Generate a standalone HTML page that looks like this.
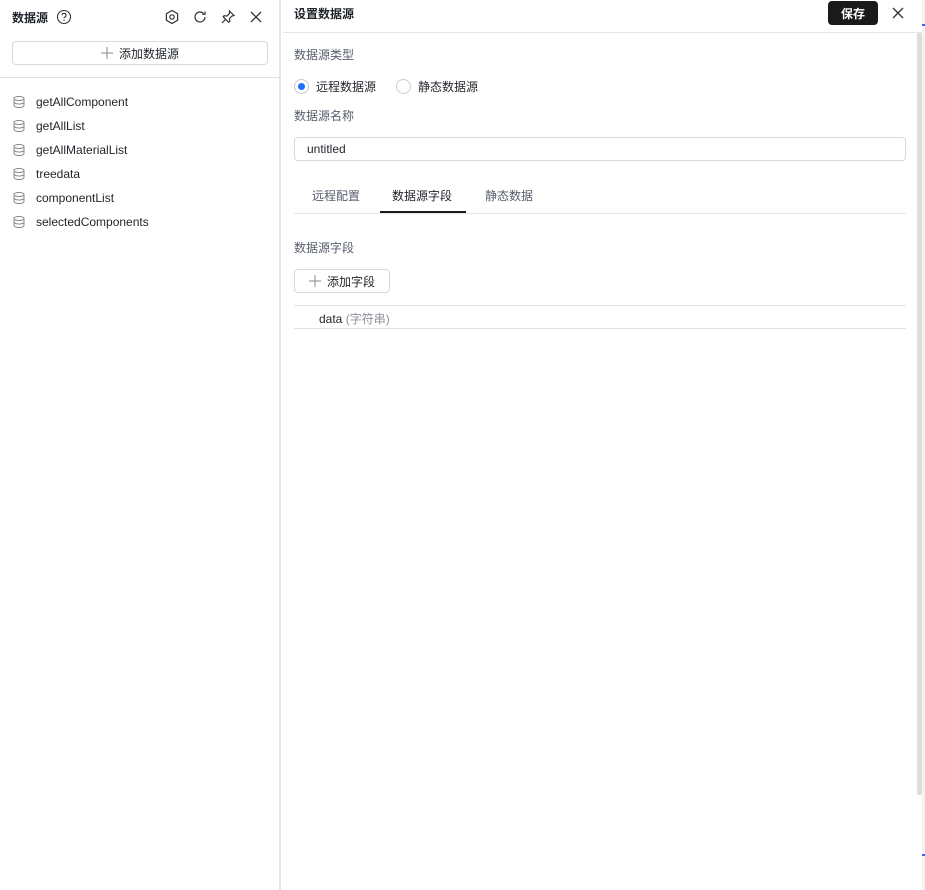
<!DOCTYPE html>
<html><head><meta charset="utf-8"><style>
*{box-sizing:border-box;margin:0;padding:0}
body{width:925px;height:890px;overflow:hidden;background:#fff;font-family:"Liberation Sans","Noto Sans CJK SC",sans-serif;font-size:12px;color:#1f2329;position:relative}
.abs{position:absolute}
.left{left:0;top:0;width:281px;height:890px;border-right:2px solid #e6e6e6}
.item{position:absolute;left:12px;height:20px;display:flex;align-items:center;font-size:12px;color:#1f2329}
.item svg{margin-right:10px}
.lbl{color:#575d6c;font-size:12px}
.btn{display:flex;align-items:center;justify-content:center}
.btn svg{margin-right:6px}
</style></head><body>
<div class="abs left">
  <div class="abs" style="left:12px;top:9px;font-weight:bold;font-size:12px">数据源</div>
  <svg class="abs" style="left:56px;top:9px" width="16" height="16" viewBox="0 0 16 16"><circle cx="8" cy="8" r="6.5" fill="none" stroke="#333" stroke-width="1.1"/><path d="M6 6.3a2 2 0 1 1 2.6 1.9c-.5.2-.6.5-.6 1.1" fill="none" stroke="#333" stroke-width="1.1"/><circle cx="8" cy="11.3" r=".7" fill="#333"/></svg>
  <svg class="abs" style="left:164px;top:9px" width="16" height="16" viewBox="0 0 16 16"><path d="M8 1.5l5.6 3.2v6.6L8 14.5 2.4 11.3V4.7z" fill="none" stroke="#333" stroke-width="1.2"/><circle cx="8" cy="8" r="2.2" fill="none" stroke="#333" stroke-width="1.2"/></svg>
  <svg class="abs" style="left:192px;top:9px" width="16" height="16" viewBox="0 0 16 16"><path d="M13 8a5 5 0 1 1-1.5-3.6M13 2.5v2.8h-2.8" fill="none" stroke="#333" stroke-width="1.2"/></svg>
  <svg class="abs" style="left:220px;top:9px" width="16" height="16" viewBox="0 0 16 16"><path d="M9.5 2l4.5 4.5-2 .5-2.5 2.5.2 3-1 .8L3.2 7.8l.8-1 3 .2L9.5 4.5zM5.5 10.5L2 14" fill="none" stroke="#333" stroke-width="1.2"/></svg>
  <svg class="abs" style="left:249px;top:10px" width="14" height="14" viewBox="0 0 14 14"><path d="M2 2l10 10M12 2L2 12" stroke="#333" stroke-width="1.3"/></svg>
  <div class="abs btn" style="left:12px;top:41px;width:256px;height:24px;border:1px solid #d9d9d9;border-radius:4px;font-size:12px"><svg width="12" height="12" viewBox="0 0 12 12"><path d="M6 0v12M0 6h12" stroke="#888" stroke-width="1"/></svg>添加数据源</div>
  <div class="abs" style="left:0;top:77px;width:279px;border-top:1px solid #e0e0e0"></div>
</div>
<div class="item" style="top:92px"><svg width="14" height="14" viewBox="0 0 14 14"><g fill="none" stroke="#888" stroke-width="1"><ellipse cx="7" cy="3.5" rx="5" ry="2"/><path d="M2 3.5v7c0 1.1 2.2 2 5 2s5-.9 5-2v-7M2 7c0 1.1 2.2 2 5 2s5-.9 5-2"/></g></svg>getAllComponent</div>
<div class="item" style="top:116px"><svg width="14" height="14" viewBox="0 0 14 14"><g fill="none" stroke="#888" stroke-width="1"><ellipse cx="7" cy="3.5" rx="5" ry="2"/><path d="M2 3.5v7c0 1.1 2.2 2 5 2s5-.9 5-2v-7M2 7c0 1.1 2.2 2 5 2s5-.9 5-2"/></g></svg>getAllList</div>
<div class="item" style="top:140px"><svg width="14" height="14" viewBox="0 0 14 14"><g fill="none" stroke="#888" stroke-width="1"><ellipse cx="7" cy="3.5" rx="5" ry="2"/><path d="M2 3.5v7c0 1.1 2.2 2 5 2s5-.9 5-2v-7M2 7c0 1.1 2.2 2 5 2s5-.9 5-2"/></g></svg>getAllMaterialList</div>
<div class="item" style="top:164px"><svg width="14" height="14" viewBox="0 0 14 14"><g fill="none" stroke="#888" stroke-width="1"><ellipse cx="7" cy="3.5" rx="5" ry="2"/><path d="M2 3.5v7c0 1.1 2.2 2 5 2s5-.9 5-2v-7M2 7c0 1.1 2.2 2 5 2s5-.9 5-2"/></g></svg>treedata</div>
<div class="item" style="top:188px"><svg width="14" height="14" viewBox="0 0 14 14"><g fill="none" stroke="#888" stroke-width="1"><ellipse cx="7" cy="3.5" rx="5" ry="2"/><path d="M2 3.5v7c0 1.1 2.2 2 5 2s5-.9 5-2v-7M2 7c0 1.1 2.2 2 5 2s5-.9 5-2"/></g></svg>componentList</div>
<div class="item" style="top:212px"><svg width="14" height="14" viewBox="0 0 14 14"><g fill="none" stroke="#888" stroke-width="1"><ellipse cx="7" cy="3.5" rx="5" ry="2"/><path d="M2 3.5v7c0 1.1 2.2 2 5 2s5-.9 5-2v-7M2 7c0 1.1 2.2 2 5 2s5-.9 5-2"/></g></svg>selectedComponents</div>

<div class="abs" style="left:294px;top:5px;font-weight:bold;font-size:12px">设置数据源</div>
<div class="abs" style="left:828px;top:1px;width:50px;height:24px;background:#1a1a1a;border-radius:4px;color:#fff;font-weight:bold;display:flex;align-items:center;justify-content:center">保存</div>
<svg class="abs" style="left:891px;top:6px" width="14" height="14" viewBox="0 0 14 14"><path d="M2 2l10 10M12 2L2 12" stroke="#333" stroke-width="1.3"/></svg>
<div class="abs" style="left:283px;top:32px;width:639px;border-top:1px solid #e6e6e6"></div>
<div class="abs" style="left:917px;top:33px;width:5px;height:762px;background:#ddd;border-radius:2px"></div>
<div class="abs" style="left:922px;top:0;width:3px;height:890px;background:#f4f4f4"></div>
<div class="abs" style="left:922px;top:24px;width:3px;height:2px;background:#1e6fff"></div>
<div class="abs" style="left:922px;top:854px;width:3px;height:2px;background:#1e6fff"></div>

<div class="abs lbl" style="left:294px;top:46px">数据源类型</div>
<div class="abs" style="left:294px;top:79px;width:15px;height:15px;border:1px solid #ccc;border-radius:50%"><div style="position:absolute;left:3px;top:3px;width:7px;height:7px;border-radius:50%;background:#1e6fff"></div></div>
<div class="abs" style="left:316px;top:78px">远程数据源</div>
<div class="abs" style="left:396px;top:79px;width:15px;height:15px;border:1px solid #ccc;border-radius:50%"></div>
<div class="abs" style="left:418px;top:78px">静态数据源</div>
<div class="abs lbl" style="left:294px;top:107px">数据源名称</div>
<div class="abs" style="left:294px;top:137px;width:612px;height:24px;border:1px solid #d9d9d9;border-radius:4px;padding-left:12px;line-height:22px">untitled</div>

<div class="abs lbl" style="left:312px;top:187px">远程配置</div>
<div class="abs" style="left:392px;top:187px">数据源字段</div>
<div class="abs lbl" style="left:485px;top:187px">静态数据</div>
<div class="abs" style="left:294px;top:213px;width:612px;border-top:1px solid #e6e6e6"></div>
<div class="abs" style="left:380px;top:211px;width:86px;height:2px;background:#1a1a1a"></div>

<div class="abs lbl" style="left:294px;top:239px">数据源字段</div>
<div class="abs btn" style="left:294px;top:269px;width:96px;height:24px;border:1px solid #d9d9d9;border-radius:4px"><svg width="12" height="12" viewBox="0 0 12 12"><path d="M6 0v12M0 6h12" stroke="#888" stroke-width="1"/></svg>添加字段</div>
<div class="abs" style="left:294px;top:305px;width:612px;border-top:1px solid #e0e0e0"></div>
<div class="abs" style="left:319px;top:310px">data <span style="color:#8a8e99">(字符串)</span></div>
<div class="abs" style="left:294px;top:328px;width:612px;border-top:1px solid #e0e0e0"></div>
</body></html>
